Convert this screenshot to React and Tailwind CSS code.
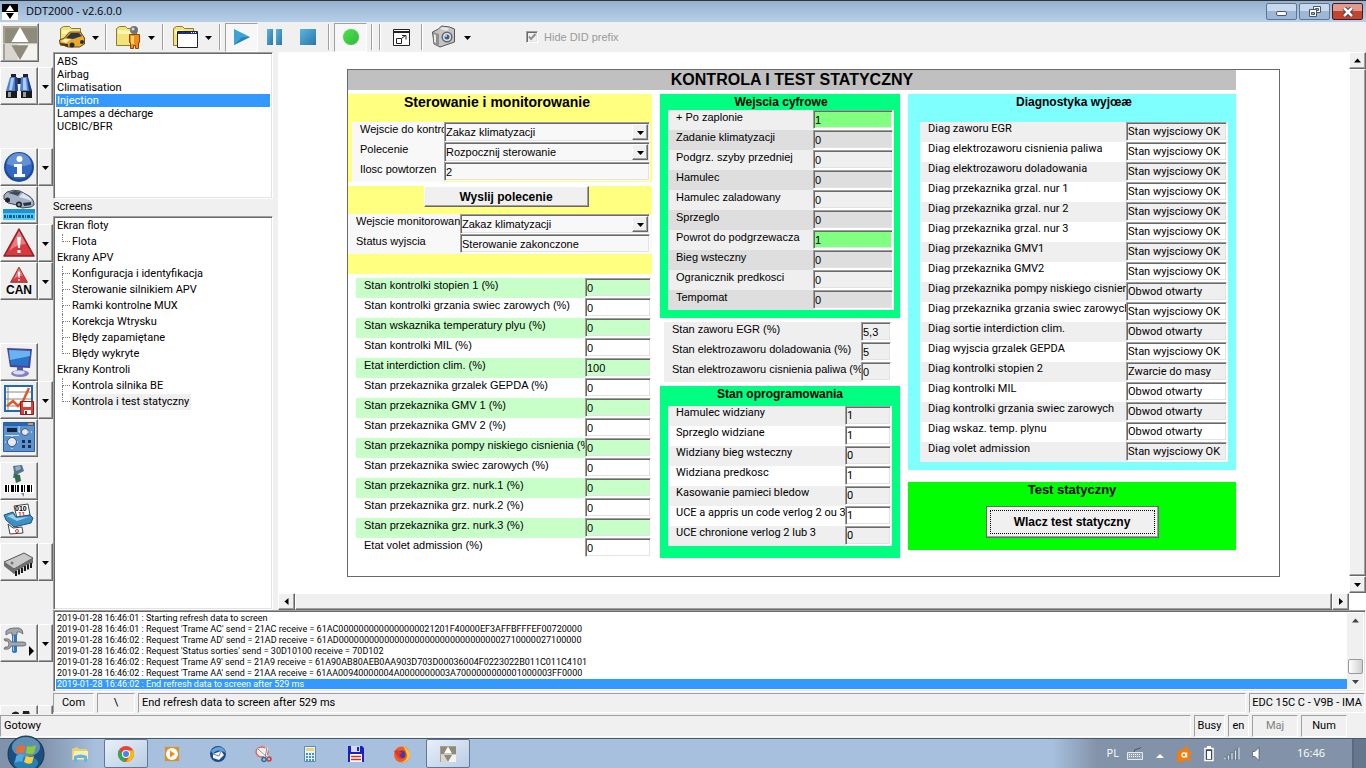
import { useId } from 'react';

const SUNKEN =
  'border border-[#a0a0a0] border-r-white border-b-white shadow-[inset_1px_1px_0_#696969,inset_-1px_-1px_0_#e3e3e3]';
const RAISED =
  'border border-white border-r-[#696969] border-b-[#696969] bg-[#f0f0f0] shadow-[inset_-1px_-1px_0_#a0a0a0]';

const ECUS = ['ABS', 'Airbag', 'Climatisation', 'Injection', 'Lampes a décharge', 'UCBIC/BFR'];

const SCREENS = [
  { name: 'Ekran floty', items: ['Flota'] },
  {
    name: 'Ekrany APV',
    items: [
      'Konfiguracja i identyfikacja',
      'Sterowanie silnikiem APV',
      'Ramki kontrolne MUX',
      'Korekcja Wtrysku',
      'Błędy zapamiętane',
      'Błędy wykryte',
    ],
  },
  { name: 'Ekrany Kontroli', items: ['Kontrola silnika BE', 'Kontrola i test statyczny'] },
];

const STATES = [
  ['Stan kontrolki stopien 1 (%)', '0'],
  ['Stan kontrolki grzania swiec zarowych (%)', '0'],
  ['Stan wskaznika temperatury plyu (%)', '0'],
  ['Stan kontrolki MIL (%)', '0'],
  ['Etat interdiction clim. (%)', '100'],
  ['Stan przekaznika grzalek GEPDA (%)', '0'],
  ['Stan przekaznika GMV 1 (%)', '0'],
  ['Stan przekaznika GMV 2 (%)', '0'],
  ['Stan przekaznika pompy niskiego cisnienia (%)', '0'],
  ['Stan przekaznika swiec zarowych (%)', '0'],
  ['Stan przekaznika grz. nurk.1 (%)', '0'],
  ['Stan przekaznika grz. nurk.2 (%)', '0'],
  ['Stan przekaznika grz. nurk.3 (%)', '0'],
  ['Etat volet admission (%)', '0'],
];

const INPUTS = [
  ['+ Po zaplonie', '1'],
  ['Zadanie klimatyzacji', '0'],
  ['Podgrz. szyby przedniej', '0'],
  ['Hamulec', '0'],
  ['Hamulec zaladowany', '0'],
  ['Sprzeglo', '0'],
  ['Powrot do podgrzewacza', '1'],
  ['Bieg wsteczny', '0'],
  ['Ogranicznik predkosci', '0'],
  ['Tempomat', '0'],
];

const VALVES = [
  ['Stan zaworu EGR (%)', '5,3'],
  ['Stan elektrozaworu doladowania (%)', '5'],
  ['Stan elektrozaworu cisnienia paliwa (%)', '0'],
];

const SOFTWARE = [
  ['Hamulec widziany', '1'],
  ['Sprzeglo widziane', '1'],
  ['Widziany bieg wsteczny', '0'],
  ['Widziana predkosc', '1'],
  ['Kasowanie pamieci bledow', '0'],
  ['UCE a appris un code verlog 2 ou 3', '1'],
  ['UCE chronione verlog 2 lub 3', '0'],
];

const OK = 'Stan wyjsciowy OK';
const OPEN = 'Obwod otwarty';
const OUTPUTS = [
  ['Diag zaworu EGR', OK],
  ['Diag elektrozaworu cisnienia paliwa', OK],
  ['Diag elektrozaworu doladowania', OK],
  ['Diag przekaznika grzal. nur 1', OK],
  ['Diag przekaznika grzal. nur 2', OK],
  ['Diag przekaznika grzal. nur 3', OK],
  ['Diag przekaznika GMV1', OK],
  ['Diag przekaznika GMV2', OK],
  ['Diag przekaznika pompy niskiego cisnienia', OPEN],
  ['Diag przekaznika grzania swiec zarowych', OK],
  ['Diag sortie interdiction clim.', OPEN],
  ['Diag wyjscia grzalek GEPDA', OK],
  ['Diag kontrolki stopien 2', 'Zwarcie do masy'],
  ['Diag kontrolki MIL', OPEN],
  ['Diag kontrolki grzania swiec zarowych', OPEN],
  ['Diag wskaz. temp. plynu', OPEN],
  ['Diag volet admission', OK],
];

const LOG = [
  '2019-01-28 16:46:01 : Starting refresh data to screen',
  "2019-01-28 16:46:01 : Request 'Trame AC' send = 21AC receive = 61AC0000000000000000021201F40000EF3AFFBFFFEF00720000",
  "2019-01-28 16:46:02 : Request 'Trame AD' send = 21AD receive = 61AD000000000000000000000000000000002710000027100000",
  "2019-01-28 16:46:02 : Request 'Status sorties' send = 30D10100 receive = 70D102",
  "2019-01-28 16:46:02 : Request 'Trame A9' send = 21A9 receive = 61A90AB80AEB0AA903D703D00036004F0223022B011C011C4101",
  "2019-01-28 16:46:02 : Request 'Trame AA' send = 21AA receive = 61AA00940000004A0000000003A7000000000001000003FF0000",
  '2019-01-28 16:46:02 : End refresh data to screen after 529 ms',
];

/* ---------- small parts ---------- */

function Caret({ dir = 'down', className = '' }) {
  const paths = {
    down: 'M0 2h7L3.5 6z',
    up: 'M0 5.500h7L3.5 1.500z',
    left: 'M5.500 0v7L1.500 3.500z',
    right: 'M2 0v7L6 3.500z',
  };
  return (
    <svg viewBox="0 0 7 7" className={`h-[7px] w-[7px] shrink-0 ${className}`}>
      <path d={paths[dir]} fill="currentColor" />
    </svg>
  );
}

function Field({ label, value, bg, fieldBg, width }) {
  const id = useId();
  return (
    <div className="flex h-5">
      <label
        htmlFor={id}
        className={`min-w-0 flex-1 overflow-hidden whitespace-nowrap pl-2 leading-[14px] ${bg}`}
      >
        {label}
      </label>
      <input
        id={id}
        readOnly
        defaultValue={value}
        className={`h-[19px] px-px outline-none ${SUNKEN} ${width} ${fieldBg || bg}`}
      />
    </div>
  );
}

function Combo({ label, options, width }) {
  const id = useId();
  return (
    <div className="flex h-5 bg-[#f8f8f8]">
      <label htmlFor={id} className="min-w-0 flex-1 overflow-hidden whitespace-nowrap pl-2 leading-[14px]">
        {label}
      </label>
      <div className={`relative h-5 ${width}`}>
        <select
          id={id}
          className={`h-full w-full appearance-none bg-[#f8f8f8] pr-4 pl-px outline-none ${SUNKEN}`}
        >
          {options.map((o) => (
            <option key={o}>{o}</option>
          ))}
        </select>
        <span
          className={`pointer-events-none absolute top-[2px] right-[2px] bottom-[2px] flex w-4 items-center justify-center ${RAISED}`}
        >
          <Caret />
        </span>
      </div>
    </div>
  );
}

function Heading({ className = 'text-xs', children }) {
  return <h2 className={`text-center font-bold leading-4 ${className}`}>{children}</h2>;
}

function ScrollButton({ dir, label }) {
  return (
    <button aria-label={label} className={`flex h-[17px] w-[17px] shrink-0 items-center justify-center ${RAISED}`}>
      <Caret dir={dir} />
    </button>
  );
}

/* ---------- icons ---------- */

function LogoMark({ className }) {
  return (
    <svg viewBox="0 0 32 32" className={className}>
      <path fill="#a5a191" d="M0 0h32v32H0z" />
      <path fill="#8f8b7a" d="M2 2h30v14H2z" />
      <path fill="#f4f3f0" d="M2 17h30v15H2z" />
      <path fill="#d8d6cf" d="M2 17h12v15H2z" />
      <path fill="#fff" d="M16 1l8 14H8z" />
      <path fill="#8f8b7a" d="M16 32l8-14H8z" />
      <path fill="#c9c7bd" d="M0 16h32v1H0z" />
    </svg>
  );
}

function Binoculars() {
  return (
    <svg viewBox="0 0 32 32" className="h-8 w-8">
      <path fill="#222" d="M8 4h5v4H8zM20 4h5v4h-5zM13 8h6v6h-6z" />
      <path fill="#4f7fd0" d="M7 7h7l1 14H3zM18 7h7l4 14H17z" />
      <path fill="#a9cdf8" d="M8 8h3L9 20H6zM20 8h3l1 12h-4z" />
      <path fill="#1f3f86" d="M12 7h2l1 14h-3zM24 7h1l4 14h-3z" />
      <path fill="#1a1a1a" d="M3 21h11v7H3zM18 21h11v7H18z" />
      <path fill="#999" d="M5 22h3v5H5zM20 22h3v5h-3z" />
    </svg>
  );
}

function Info() {
  return (
    <svg viewBox="0 0 32 32" className="h-8 w-8">
      <circle cx="16" cy="16" r="15" fill="#1d4c9e" />
      <circle cx="16" cy="15" r="13" fill="#3268c0" />
      <path fill="#86abe2" opacity=".6" d="M4 13a12 11 0 0124 0q-12 5-24 0z" />
      <circle cx="16.500" cy="8" r="3" fill="#fff" />
      <path fill="#fff" d="M11 13h8v10h3v3H11v-3h3v-7h-3z" />
    </svg>
  );
}

function Car() {
  return (
    <svg viewBox="0 0 32 32" className="h-8 w-8">
      <path fill="#a4b2c6" stroke="#3f4854" d="M1 6l3-3q7-3 13-1l9 5q5 3 5 9l-3 2-9 1-5-3-9-2-4-4z" />
      <path fill="#3f4c5a" d="M5 4l6-2q4 0 7 1l-3 4q-5-2-10-3z" />
      <path fill="#dbe5f1" d="M16 8l4-4 6 4 3 4-6-2z" />
      <path fill="#2b333d" d="M20 14l8-1v3l-7 1z" />
      <circle cx="4.500" cy="11" r="2.500" fill="#222" />
      <circle cx="16" cy="15.500" r="3" fill="#222" />
      <circle cx="16" cy="15.500" r="1.500" fill="#999" />
      <path fill="#1f93cf" d="M0 20h32v4H0z" />
      <path fill="#53c8f2" d="M0 24h32v7H0z" />
      <path
        stroke="#0c5f93"
        strokeWidth="3"
        strokeDasharray="2 1 1 1 3 1"
        d="M1 27.500h30"
      />
    </svg>
  );
}

function Warning({ className }) {
  return (
    <svg viewBox="0 0 32 32" className={className}>
      <path fill="#d93a3f" stroke="#8c2226" strokeWidth="1.500" strokeLinejoin="round" d="M16 2l15 27H1z" />
      <path fill="#f39a9b" opacity=".7" d="M16 4l7 13Q14 17 6 24z" />
      <path fill="#fff" d="M14 10h4l-1 11h-2zM14.500 23h3v3h-3z" />
    </svg>
  );
}

function CanWarning() {
  return (
    <span className="flex flex-col items-center">
      <Warning className="h-[18px] w-5" />
      <span className="text-xs font-bold leading-3">CAN</span>
    </span>
  );
}

function Monitor() {
  return (
    <svg viewBox="0 0 32 32" className="h-8 w-8">
      <path fill="#45479a" d="M4 2l25 1-2 19-20-1z" />
      <path fill="#2b73c8" d="M6 4l21 1-2 15-17-1z" />
      <path fill="#69b4ee" d="M6 4l21 1v5L7 14z" />
      <path fill="#55579f" d="M14 21h6v5h-6z" />
      <ellipse cx="17" cy="27.500" rx="9" ry="3.500" fill="#7f81c2" />
      <ellipse cx="16" cy="26.500" rx="6" ry="2" fill="#dcdcf2" />
    </svg>
  );
}

function GraphSave() {
  return (
    <svg viewBox="0 0 32 32" className="h-8 w-8">
      <path fill="#fff" stroke="#2268b8" strokeWidth="2" d="M2 2h27v25H2z" />
      <path stroke="#888" d="M5 3v23M3 8h25M3 15h25M3 22h25" />
      <path fill="none" stroke="#e0592b" strokeWidth="2.500" d="M4 22l6-5 5 5 5-5 6-13" />
      <path fill="#d8403a" stroke="#8d1c18" d="M17.500 17.500h13v13h-13z" />
      <path fill="#fff" d="M20 18h8v5h-8zM21 26h7v4h-7z" />
      <path fill="#8d1c18" d="M22 27h2v3h-2z" />
    </svg>
  );
}

function Scope() {
  return (
    <svg viewBox="0 0 32 32" className="h-8 w-8">
      <path fill="#5c92cf" stroke="#2c5d9c" d="M.5.5h31v29H.5z" />
      <path fill="#2368b8" d="M1 1h30v3H1z" />
      <path fill="#f28b31" d="M25 1h5v2h-5z" />
      <path fill="#14263f" d="M4 6h10v4H4z" />
      <path stroke="#d4e4f5" d="M2 13.500h14M16 4v6" />
      <g fill="#e3e8ee" stroke="#3c5475">
        <circle cx="22" cy="10" r="3.500" />
        <circle cx="9" cy="20" r="4.500" />
      </g>
      <path stroke="#fff" strokeDasharray="1 2" d="M16 10h13M2 20h14M9 14v13" />
      <path fill="#1b2e4b" d="M19 18h3v3h-3zM25 18h3v3h-3zM19 23h3v3h-3zM25 23h3v3h-3z" />
    </svg>
  );
}

function BarcodeReader() {
  return (
    <svg viewBox="0 0 32 32" className="h-8 w-8">
      <path fill="#55738c" d="M10 1l9-1 2 6-6 3-1 4h-4l1-6z" />
      <path fill="#2f6b4c" d="M11 9l6 1 1 6-5 2z" />
      <path fill="#8fb0c4" d="M12 2l5-1 1 3-5 2z" />
      <path fill="#fff" d="M1 19h30v9H1z" />
      <path
        stroke="#000"
        strokeWidth="7"
        strokeDasharray="2 1 1 2 3 1 1 1 2 2"
        d="M2 23.500h28"
      />
      <path fill="#6d8fa6" d="M18 28h3v4z" />
    </svg>
  );
}

function Shredder() {
  return (
    <svg viewBox="0 0 32 32" className="h-8 w-8">
      <path fill="#fff" stroke="#444" d="M11 3l14-2 2 11-13 3z" />
      <text x="12" y="8" fontSize="7" fontWeight="bold" fontFamily="Liberation Sans, sans-serif">010</text>
      <text x="15" y="14" fontSize="7" fontWeight="bold" fill="#d33" fontFamily="Liberation Sans, sans-serif">11</text>
      <path fill="#3d8fc4" stroke="#1b587f" d="M1 12l9-3 3 5 14-2 3 3-2 5-17 4L3 17z" />
      <path fill="#9bd0ee" d="M4 13l6-2 3 4 13-1-12 4z" />
      <path fill="#fff" stroke="#444" d="M5 21l5 4 9-1 1 6-13 1z" />
      <circle cx="14" cy="28" r="1.500" fill="none" stroke="#d33" />
    </svg>
  );
}

function Chip() {
  return (
    <svg viewBox="0 0 32 32" className="h-8 w-8">
      <path fill="#c9c9c9" stroke="#555" d="M1 16l20-9 9 5-19 11z" />
      <path fill="#6f6f6f" d="M1 16l10 7v5L1 20zM11 23l19-11v5L11 28z" />
      <path
        stroke="#1a1a1a"
        strokeWidth="2"
        d="M13 25v5M16 23.500v5M19 22v5M22 20v5M25 18.500v5M28 17v5"
      />
      <path stroke="#ddd" d="M14.500 24v4M17.500 22.500v4M20.500 21v4M23.500 19v4M26.500 17.500v4" />
      <circle cx="9" cy="17" r="1.500" fill="#777" />
    </svg>
  );
}

function Tools() {
  return (
    <svg viewBox="0 0 32 32" className="h-8 w-8">
      <path fill="#2e78c4" d="M9 7h5v18q-2.500 2-5 0z" />
      <path fill="#9cc8f2" d="M10 8h1v16h-1z" />
      <path fill="#a3a8ac" stroke="#5b6064" strokeWidth=".8" d="M3 4q3-3 8-3h5q4 1 4 6-3-3-6-2v3H9V6Q6 5 3 8z" />
      <path
        fill="#a3a8ac"
        stroke="#5b6064"
        strokeWidth=".8"
        d="M1 12q6-1 7 3h12q3 0 3 2t-3 2H8q-1 4-7 3l1-2h3q2-3 0-6H2z"
      />
      <path fill="#000" d="M26 19v10l5-5z" />
    </svg>
  );
}

function People() {
  return (
    <svg viewBox="0 0 32 32" className="h-8 w-8">
      <path fill="#222" d="M9 5q4-3 7 0v6H8zM20 3h6l2 8h-9z" />
      <path fill="#888" d="M16 6h3v5h-3z" />
    </svg>
  );
}

const folder = (
  <>
    <path fill="#f1e37a" stroke="#8b7f2b" d="M1.500 3.500l3-2h6l2 2h9v17h-20z" />
    <path fill="#fbf5b5" d="M3 5h8l2 1h7v3H3z" />
  </>
);

function FolderCar() {
  return (
    <svg viewBox="0 0 26 24" className="h-6 w-[26px]">
      {folder}
      <path fill="#e9a92c" stroke="#6b4a12" d="M.5 15l5-2 5-6h11l4 6v6l-5 3H9l-8-3z" />
      <path fill="#2c3742" d="M7 13l5-5h8l3 3-9 3z" />
      <path fill="#fff3c4" d="M2 16l4-2h6l-5 4z" />
      <path fill="#4a3510" d="M1 18l8 1v3l-8-3z" />
      <circle cx="13" cy="20" r="2.500" fill="#2b2b2b" />
      <circle cx="23" cy="17" r="2" fill="#2b2b2b" />
    </svg>
  );
}

function FolderPerson() {
  return (
    <svg viewBox="0 0 26 24" className="h-6 w-[26px]">
      {folder}
      <path fill="#f08c1c" stroke="#8a4a06" d="M14.500 9.500h10v8h-1v6h-3v-3h-2v3h-3v-6h-1z" />
      <path fill="#ffcf62" d="M16 11h3v8h-3z" />
      <circle cx="19" cy="5" r="4" fill="#6f7378" />
      <circle cx="18" cy="4" r="1.500" fill="#d4d7da" />
    </svg>
  );
}

function FolderWindow() {
  return (
    <svg viewBox="0 0 26 24" className="h-6 w-[26px]">
      {folder}
      <path fill="#fff" stroke="#222" d="M5.500 6.500h20v16h-20z" />
      <path fill="#1d2e83" d="M6 7h19v2H6z" />
      <path fill="#fff" d="M19 7h1v1h-1zM21 7h1v1h-1zM23 7h1v1h-1z" />
    </svg>
  );
}

function Camera() {
  return (
    <svg viewBox="0 0 26 24" className="h-6 w-[26px]">
      <path fill="#c4c4c4" stroke="#555" d="M1.500 7l6-3 3-3 8 1 5 2v13L9 22l-6-3z" />
      <path fill="#909090" d="M2 7l6 2v13l-5-3z" />
      <path fill="#e8e8e8" d="M9 4l3-2 6 1-2 3zM3 9l2 1v8l-2-1z" />
      <circle cx="16" cy="12" r="5.500" fill="#666" />
      <circle cx="16" cy="12" r="4" fill="#e4e4e4" />
      <circle cx="16" cy="12" r="2.500" fill="#33618f" />
      <circle cx="15" cy="11" r="1" fill="#bfe0ff" />
    </svg>
  );
}

/* ---------- side bar ---------- */

function SideButton({ label, menu, children }) {
  return (
    <div className="flex h-[38px] shrink-0">
      <button
        aria-label={label}
        className={`flex w-[38px] items-center justify-center overflow-hidden ${RAISED}`}
      >
        {children}
      </button>
      {menu && (
        <button aria-label={`${label} menu`} className={`flex w-[15px] items-center justify-center ${RAISED}`}>
          <Caret />
        </button>
      )}
    </div>
  );
}

function SideBar() {
  return (
    <nav className="flex w-[53px] shrink-0 flex-col gap-[5px] overflow-hidden">
      <button aria-label="Home" className={`mt-px flex h-[39px] w-[39px] shrink-0 items-center justify-center ${RAISED}`}>
        <LogoMark className="h-[34px] w-[34px]" />
      </button>
      <SideButton label="Search" menu>
        <Binoculars />
      </SideButton>
      <div className="h-[33px] shrink-0" />
      <div className="flex shrink-0 flex-col">
        <SideButton label="Information" menu>
          <Info />
        </SideButton>
        <SideButton label="Vehicle">
          <Car />
        </SideButton>
        <SideButton label="Faults" menu>
          <Warning className="h-8 w-8" />
        </SideButton>
        <SideButton label="CAN faults" menu>
          <CanWarning />
        </SideButton>
      </div>
      <div className="h-[33px] shrink-0" />
      <div className="flex shrink-0 flex-col">
        <SideButton label="Monitor">
          <Monitor />
        </SideButton>
        <SideButton label="Graph" menu>
          <GraphSave />
        </SideButton>
        <SideButton label="Oscilloscope">
          <Scope />
        </SideButton>
      </div>
      <div className="flex shrink-0 flex-col">
        <SideButton label="Barcode">
          <BarcodeReader />
        </SideButton>
        <SideButton label="Data">
          <Shredder />
        </SideButton>
      </div>
      <SideButton label="Memory" menu>
        <Chip />
      </SideButton>
      <div className="h-[33px] shrink-0" />
      <SideButton label="Tools" menu>
        <Tools />
      </SideButton>
      <div className="h-[33px] shrink-0" />
      <SideButton label="Users" menu>
        <People />
      </SideButton>
    </nav>
  );
}

/* ---------- tool bar ---------- */

function Separator() {
  return <span className="h-[26px] w-[2px] shrink-0 border-r border-l border-[#a0a0a0] border-r-white" />;
}

function MenuTool({ label, width = 'w-[55px]', children }) {
  return (
    <button aria-label={label} className={`flex h-full items-center justify-center gap-[7px] ${width}`}>
      {children}
      <Caret className="h-2 w-2" />
    </button>
  );
}

function Tool({ label, pressed, children }) {
  return (
    <button
      aria-label={label}
      className={`flex h-[29px] w-[33px] items-center justify-center ${
        pressed ? 'border border-[#a0a0a0] border-r-white border-b-white bg-[#f7f7f7]' : ''
      }`}
    >
      {children}
    </button>
  );
}

function ToolBar() {
  return (
    <div className="flex h-[30px] shrink-0 items-center overflow-hidden">
      <MenuTool label="Open vehicle" width="w-[52px]">
        <FolderCar />
      </MenuTool>
      <Separator />
      <MenuTool label="Open user">
        <FolderPerson />
      </MenuTool>
      <Separator />
      <MenuTool label="Open screen">
        <FolderWindow />
      </MenuTool>
      <Separator />
      <div className="flex px-1">
        <Tool label="Play" pressed>
          <svg viewBox="0 0 16 16" className="h-4 w-4">
            <path fill="#3ba3d6" d="M0 0l16 8-16 8z" />
            <path fill="#2b84b8" d="M0 16l16-8H8z" />
          </svg>
        </Tool>
        <Tool label="Pause">
          <span className="flex gap-[3px]">
            <span className="h-4 w-[6px] bg-gradient-to-br from-[#5bb5e0] to-[#2a77a8]" />
            <span className="h-4 w-[6px] bg-gradient-to-br from-[#5bb5e0] to-[#2a77a8]" />
          </span>
        </Tool>
        <Tool label="Stop">
          <span className="h-4 w-4 bg-gradient-to-br from-[#5bb5e0] to-[#2a77a8]" />
        </Tool>
      </div>
      <Separator />
      <div className="flex px-1">
        <Tool label="Record" pressed>
          <span className="h-4 w-4 rounded-full bg-gradient-to-br from-[#4fe24f] to-[#2fb83a]" />
        </Tool>
      </div>
      <Separator />
      <span className="w-[6px]" />
      <Separator />
      <span className="flex w-10 justify-center">
        <Tool label="Fit to screen">
          <svg viewBox="0 0 17 17" className="h-[17px] w-[17px]">
            <path fill="#fff" stroke="#222" d="M.5.5h16v16H.5z" />
            <path fill="#222" d="M1 2h15v2H1z" />
            <path fill="none" stroke="#222" d="M3.500 9.500h5v5h-5zM8.500 9.500l4-3M9 6.500h4v4" />
          </svg>
        </Tool>
      </span>
      <Separator />
      <MenuTool label="Screenshot">
        <Camera />
      </MenuTool>
      <label className="ml-12 flex items-center gap-[6px] text-[11px] text-[#9a9a9a]">
        <span className="relative flex">
          <input type="checkbox" defaultChecked disabled className={`h-3 w-3 appearance-none bg-[#f0f0f0] ${SUNKEN}`} />
          <svg viewBox="0 0 12 12" className="pointer-events-none absolute inset-0 h-3 w-3">
            <path fill="none" stroke="#8f8f8f" strokeWidth="2" d="M3 5.500l2 2.500 4.500-5" />
          </svg>
        </span>
        Hide DID prefix
      </label>
    </div>
  );
}

/* ---------- lists on the left ---------- */

function Explorer() {
  return (
    <aside className="flex w-[220px] shrink-0 flex-col font-['Roboto',sans-serif] text-[11px]">
      <ul className={`h-[147px] shrink-0 bg-white p-[2px] ${SUNKEN}`}>
        {ECUS.map((name) => (
          <li
            key={name}
            className={`h-[13px] pl-px leading-[13px] ${name === 'Injection' ? 'bg-[#3399ff] text-white' : ''}`}
          >
            {name}
          </li>
        ))}
      </ul>
      <h3 className="h-[17px] shrink-0 leading-[15px]">Screens</h3>
      <ul className={`min-h-0 flex-1 overflow-hidden bg-white px-[2px] pt-px ${SUNKEN}`}>
        {SCREENS.map((group) => (
          <li key={group.name}>
            <div className="h-4 pl-px leading-4">{group.name}</div>
            <ul className="pl-[6px]">
              {group.items.map((item, i) => (
                <li key={item} className="flex h-4">
                  <span className="w-2">
                    <span className="block h-2 border-b border-l border-dotted border-[#808080]" />
                    {i < group.items.length - 1 && (
                      <span className="block h-2 border-l border-dotted border-[#808080]" />
                    )}
                  </span>
                  <span
                    className={`px-[2px] leading-4 ${item === 'Kontrola i test statyczny' ? 'bg-[#f0f0f0]' : ''}`}
                  >
                    {item}
                  </span>
                </li>
              ))}
            </ul>
          </li>
        ))}
      </ul>
    </aside>
  );
}

/* ---------- main screen ---------- */

function ControlColumn() {
  return (
    <section className="w-[304px] shrink-0">
      <div className="bg-[#ffff80] pr-[2px] pl-1">
        <Heading className="h-7 pr-2 text-sm">Sterowanie i monitorowanie</Heading>
        <Combo label="Wejscie do kontroli" options={['Zakaz klimatyzacji']} width="w-[206px]" />
        <Combo label="Polecenie" options={['Rozpocznij sterowanie']} width="w-[206px]" />
        <Field label="Ilosc powtorzen" value="2" bg="bg-[#f8f8f8]" width="w-[206px]" />
      </div>
      <div className="mt-1 flex h-7 justify-center bg-[#ffff80] pl-3">
        <button className={`h-[21px] w-[165px] text-xs font-bold ${RAISED}`}>Wyslij polecenie</button>
      </div>
      <div className="bg-[#f8f8f8] pr-[2px]">
        <Combo label="Wejscie monitorowania" options={['Zakaz klimatyzacji']} width="w-[190px]" />
        <Field label="Status wyjscia" value="Sterowanie zakonczone" bg="bg-[#f8f8f8]" width="w-[190px]" />
      </div>
      <div className="mb-1 h-5 bg-[#ffff80]" />
      <div className="pr-px pl-2">
        {STATES.map(([label, value], i) => (
          <Field key={label} label={label} value={value} bg={i % 2 ? 'bg-white' : 'bg-[#c8ffc8]'} width="w-[66px]" />
        ))}
      </div>
    </section>
  );
}

function InputColumn() {
  return (
    <section className="w-[240px] shrink-0">
      <div className="bg-[#00ff80] pr-[6px] pb-2 pl-2">
        <Heading>Wejscia cyfrowe</Heading>
        <div className="bg-white pr-px">
          {INPUTS.map(([label, value], i) => (
            <Field
              key={label}
              label={label}
              value={value}
              bg={i % 2 ? 'bg-[#dedede]' : 'bg-[#efefef]'}
              fieldBg={value === '1' ? 'bg-[#80ff80]' : ''}
              width="w-20"
            />
          ))}
        </div>
      </div>
      <div className="my-1 mr-[9px] ml-1">
        {VALVES.map(([label, value]) => (
          <Field key={label} label={label} value={value} bg="bg-[#efefef]" width="w-[30px]" />
        ))}
      </div>
      <div className="bg-[#00ff80] pr-2 pb-3 pl-2">
        <Heading className="h-5 text-xs">Stan oprogramowania</Heading>
        <div className="bg-white pr-px font-['Roboto',sans-serif]">
          {SOFTWARE.map(([label, value], i) => (
            <Field key={label} label={label} value={value} bg={i % 2 ? 'bg-white' : 'bg-[#efefef]'} width="w-[46px]" />
          ))}
        </div>
      </div>
    </section>
  );
}

function OutputColumn() {
  return (
    <section className="min-w-0 flex-1">
      <div className="bg-[#80ffff] pr-2 pb-2 pl-3">
        <Heading className="h-7 text-xs">Diagnostyka wyjœæ</Heading>
        <div className="bg-white pr-px font-['Roboto',sans-serif]">
          {OUTPUTS.map(([label, value], i) => (
            <Field key={label} label={label} value={value} bg={i % 2 ? 'bg-white' : 'bg-[#efefef]'} width="w-[101px]" />
          ))}
        </div>
      </div>
      <div className="mt-3 flex h-[68px] flex-col items-center bg-[#00ff00]">
        <Heading className="h-6 text-[13px]">Test statyczny</Heading>
        <button className={`h-8 w-[173px] p-[3px] text-xs font-bold outline-1 -outline-offset-1 outline-[#696969] ${RAISED}`}>
          <span className="flex h-full items-center justify-center border border-dotted border-black">
            Wlacz test statyczny
          </span>
        </button>
      </div>
    </section>
  );
}

function Workspace() {
  return (
    <main className="ml-[5px] flex min-w-0 flex-1 flex-col bg-white">
      <div className="flex min-h-0 flex-1">
        <div className="min-w-0 flex-1 overflow-hidden pt-[17px]">
          <div className="mx-auto max-w-[933px] border border-[#696969] pr-[43px] pb-[18px] text-[11px]">
            <h1 className="mb-1 h-5 bg-[#c0c0c0] text-center text-base font-bold leading-5">
              KONTROLA I TEST STATYCZNY
            </h1>
            <div className="flex gap-2">
              <ControlColumn />
              <InputColumn />
              <OutputColumn />
            </div>
          </div>
        </div>
        <div className="flex w-[17px] shrink-0 flex-col">
          <ScrollButton dir="up" label="Scroll up" />
          <div className={`flex-1 ${RAISED}`} />
          <ScrollButton dir="down" label="Scroll down" />
        </div>
      </div>
      <div className="mr-[17px] flex h-[17px] shrink-0">
        <ScrollButton dir="left" label="Scroll left" />
        <div className={`flex-1 ${RAISED}`} />
        <ScrollButton dir="right" label="Scroll right" />
      </div>
    </main>
  );
}

function LogPanel() {
  return (
    <div className={`flex h-[82px] shrink-0 bg-white p-[2px] ${SUNKEN}`}>
      <ul className="min-w-0 flex-1 overflow-hidden whitespace-nowrap font-['Roboto',sans-serif] text-[9px]">
        {LOG.map((line, i) => (
          <li
            key={line}
            className={`h-[11px] pl-px leading-[11px] ${i === LOG.length - 1 ? 'bg-[#3399ff] text-white' : ''}`}
          >
            {line}
          </li>
        ))}
      </ul>
      <div className="flex w-4 flex-col items-center bg-[#f0f0f0] py-1 text-[#444]">
        <Caret dir="up" />
        <span className="flex-1" />
        <span className="mb-1 h-[15px] w-[15px] rounded-xs border border-[#999] bg-gradient-to-r from-white to-[#d0d0d0]" />
        <Caret />
      </div>
    </div>
  );
}

function StatusCell({ className = '', children }) {
  return (
    <span
      className={`flex items-center overflow-hidden whitespace-nowrap border border-[#a0a0a0] border-r-white border-b-white ${className}`}
    >
      {children}
    </span>
  );
}

/* ---------- window chrome ---------- */

function TitleBar() {
  return (
    <header className="flex h-[22px] shrink-0 items-center border-t border-[#333] bg-gradient-to-b from-[#96b2d1] to-[#b7cfe8] pr-[3px] pl-[2px]">
      <svg viewBox="0 0 16 16" className="h-4 w-4">
        <path fill="#000" d="M0 0h16v8H0z" />
        <path fill="#fff" d="M0 8h16v8H0zM8 1l4 6H4z" />
        <path fill="#000" d="M8 15l4-6H4z" />
      </svg>
      <span className="ml-2 flex-1 font-['Open_Sans',sans-serif] text-[11px]">DDT2000 - v2.6.0.0</span>
      <div className="flex gap-[2px]">
        {['Minimize', 'Restore'].map((name) => (
          <button
            key={name}
            aria-label={name}
            className="flex h-[17px] w-[31px] items-center justify-center rounded-xs border border-[#5f7593] bg-gradient-to-b from-[#c6d9ed] from-50% to-[#9db7d4] to-50%"
          >
            {name === 'Minimize' ? (
              <span className="mt-1 h-[5px] w-[11px] rounded-xs border border-[#4b5669] bg-white" />
            ) : (
              <svg viewBox="0 0 12 11" className="h-[11px] w-3">
                <path fill="#fff" stroke="#4b5669" d="M4.500.5h7v6h-7z" />
                <path fill="#9db7d4" stroke="#4b5669" d="M6.500 2.500h3v2h-3z" />
                <path fill="#fff" stroke="#4b5669" d="M.5 3.500h7v7h-7z" />
                <path fill="#9db7d4" stroke="#4b5669" d="M2.500 6.500h3v2h-3z" />
              </svg>
            )}
          </button>
        ))}
        <button
          aria-label="Close"
          className="flex h-[17px] w-[31px] items-center justify-center rounded-xs border border-[#4b1620] bg-gradient-to-b from-[#e09a8c] from-50% to-[#c2452f] to-50%"
        >
          <svg viewBox="0 0 12 10" className="h-[10px] w-3">
            <path stroke="#4b3540" strokeWidth="4.500" d="M2 1l8 8M10 1L2 9" />
            <path stroke="#fff" strokeWidth="2.500" d="M2 1l8 8M10 1L2 9" />
          </svg>
        </button>
      </div>
    </header>
  );
}

const TASKS = [
  {
    name: 'Explorer',
    icon: (
      <>
        <path fill="#e9cf74" d="M1 4l5-2 2 2h8v11H1z" />
        <path fill="#fbf0b4" d="M3 6h14v8H2z" />
        <path fill="#62b5e5" d="M3 11q7-3 13 0v6h-3v-4H6v4H3z" />
      </>
    ),
  },
  {
    name: 'Chrome',
    active: true,
    icon: (
      <>
        <circle cx="9" cy="9" r="8" fill="#ea4335" />
        <path fill="#34a853" d="M2 5l5 6 2 6A8 8 0 012 5z" />
        <path fill="#fbbc05" d="M9 5.500h7.200A8 8 0 019 17l3.500-6z" />
        <circle cx="9" cy="9" r="4" fill="#fff" />
        <circle cx="9" cy="9" r="3" fill="#4285f4" />
      </>
    ),
  },
  {
    name: 'Media player',
    icon: (
      <>
        <path fill="#8ec3ea" d="M1 1h16v16H1z" />
        <path fill="#f28a12" d="M2 2h14v14H2z" />
        <circle cx="9" cy="9" r="6" fill="#fff" />
        <path fill="#f28a12" d="M7 5.500l5 3.500-5 3.500z" />
      </>
    ),
  },
  {
    name: 'Thunderbird',
    icon: (
      <>
        <circle cx="9" cy="9" r="8" fill="#1c4c86" />
        <path fill="#5fa4dc" d="M2 6q5-6 12-3l3 5-4-2q-6-2-9 3z" />
        <path fill="#f3f3f0" d="M4 9l8-3 3 4-5 5-6-2z" />
        <path fill="none" stroke="#7f8a96" d="M4 9l6 2 2-5" />
      </>
    ),
  },
  {
    name: 'Snipping tool',
    icon: (
      <>
        <ellipse cx="7" cy="7" rx="6" ry="5" fill="#f6e8e6" stroke="#d86a5c" strokeWidth="1.500" />
        <path stroke="#fff" strokeWidth="2.500" d="M3 4l10 9M12 2l-2 11" />
        <path stroke="#7b8793" d="M3 4l10 9M12 2l-2 11" />
        <circle cx="14" cy="14" r="2" fill="none" stroke="#c8402f" strokeWidth="1.500" />
        <circle cx="9" cy="14.500" r="2" fill="none" stroke="#2d6da8" strokeWidth="1.500" />
      </>
    ),
  },
  {
    name: 'Calculator',
    icon: (
      <>
        <path fill="#e8f2fb" stroke="#5a8db8" d="M3.500 1.500h11v15h-11z" />
        <path fill="#f5d36a" d="M5 3h8v3H5z" />
        <path stroke="#4b92cc" strokeWidth="2" strokeDasharray="2 1" d="M5 9h8M5 12h8M5 15h8" />
      </>
    ),
  },
  {
    name: 'Commander',
    icon: (
      <>
        <path fill="#1721c4" d="M1 1h14l2 2v14H1z" />
        <path fill="#d7dbf5" d="M4 1h9v6H4z" />
        <path fill="#1721c4" d="M10 2h2v4h-2z" />
        <path fill="#fff" d="M3 9h12v8H3z" />
        <path stroke="#e02525" strokeWidth="1.500" d="M4 11.500h10M4 14.500h10" />
      </>
    ),
  },
  {
    name: 'Firefox',
    icon: (
      <>
        <circle cx="9" cy="9.500" r="8" fill="#f25c1e" />
        <path fill="#ffc52e" d="M10 1q8 4 7 10-2 7-9 6 6-1 6-7-1-5-4-9z" />
        <circle cx="8.500" cy="9.500" r="4" fill="#4a3aa8" />
        <path fill="#e8352a" d="M1 6l4-1 4 3-3 2 3 3q-4 1-5-2z" />
      </>
    ),
  },
  { name: 'DDT2000', active: true, icon: null },
];

function TaskBar() {
  return (
    <footer className="flex h-[30px] shrink-0 items-stretch border-t border-[#4a5a6e] bg-gradient-to-r from-[#8093aa] from-3% via-[#a6c0dd] via-7% to-[#a6c0dd] text-[11px]">
      <button aria-label="Start" className="relative w-[57px]">
        <svg viewBox="0 0 38 38" className="absolute -top-1 left-[7px] h-[38px] w-[38px]">
          <circle cx="19" cy="19" r="18" fill="#1c4f7e" stroke="#15324f" />
          <ellipse cx="19" cy="12" rx="14" ry="10" fill="#8fbbd9" opacity=".6" />
          <ellipse cx="19" cy="28" rx="12" ry="7" fill="#2ba3d8" opacity=".6" />
          <path fill="#ef6a2f" d="M10 12q4-3 8-1l-1 7q-4-2-8 1z" />
          <path fill="#8ccb3c" d="M20 11q4 2 9-1l-2 8q-4 2-8 0z" />
          <path fill="#4fa9e8" d="M9 21q4-3 8-1l-2 7q-3-2-7 1z" />
          <path fill="#fccf3a" d="M19 21q4 2 8 0l-2 7q-4 2-8-1z" />
        </svg>
      </button>
      <div className="flex">
        {TASKS.map(({ name, active, icon }) => (
          <button
            key={name}
            aria-label={name}
            className={`mx-px flex w-11 items-center justify-center ${
              active ? 'rounded-xs border border-[#5f7896] bg-gradient-to-br from-[#e8f0f8] to-[#b9cde3]' : ''
            }`}
          >
            {icon ? (
              <svg viewBox="0 0 18 18" className="h-[18px] w-[18px]">
                {icon}
              </svg>
            ) : (
              <LogoMark className="h-4 w-4" />
            )}
          </button>
        ))}
      </div>
      <div className="flex flex-1 items-center justify-end bg-gradient-to-r from-transparent from-65% to-[#8293a9] to-70% font-['Open_Sans',sans-serif] text-white">
        <span>PL</span>
        <svg viewBox="0 0 16 14" className="ml-2 h-[14px] w-4">
          <path fill="#93a2b4" stroke="#e4eaf0" d="M.5 5.500h15v7H.5z" />
          <path stroke="#fff" strokeDasharray="1 1" d="M2 7.500h12M2 9.500h12" />
          <path fill="none" stroke="#47566a" d="M7 5q0-3 3-3t4-2" />
        </svg>
        <svg viewBox="0 0 8 5" className="mt-1 ml-[13px] h-[5px] w-2">
          <path fill="#fff" d="M0 5l4-4 4 4z" />
        </svg>
        <svg viewBox="0 0 16 16" className="ml-3 h-4 w-4">
          <path fill="#ff7a00" d="M1 5l4 0 4-4 3 0 0 4 4 2-3 4 3 4-6-1-5 2-5-1 2-4z" />
          <circle cx="8" cy="9" r="2" fill="none" stroke="#fff" strokeWidth="1.500" />
          <path stroke="#fff" strokeWidth="1.500" d="M10.500 6.500v5" />
        </svg>
        <svg viewBox="0 0 10 16" className="ml-3 h-4 w-[10px]">
          <path fill="#3b4655" stroke="#fff" strokeWidth="1.500" d="M1 2.500h8v12H1z" />
          <path fill="#fff" d="M3 0h4v2H3zM3 5h4v8H3z" />
        </svg>
        <svg viewBox="0 0 16 13" className="ml-[10px] h-[13px] w-4">
          <path
            fill="#dfe6ee"
            stroke="#4b5a6d"
            strokeWidth=".6"
            d="M0 10h2v3H0zM3.500 8h2v5h-2zM7 5.500h2V13H7zM10.500 3h2v10h-2zM14 0h2v13h-2z"
          />
        </svg>
        <svg viewBox="0 0 9 14" className="ml-3 h-[14px] w-[9px]">
          <path fill="#fff" stroke="#45536a" strokeWidth=".7" d="M.5 4.500h2.500L7 .5v13L3 9.500H.5z" />
        </svg>
        <time className="ml-9">16:46</time>
        <button aria-label="Show desktop" className="ml-[27px] h-full w-[14px] border-l-2 border-[#5a6a7e] bg-[#65778d]" />
      </div>
    </footer>
  );
}

export default function App() {
  return (
    <div className="flex h-screen min-h-[768px] flex-col overflow-hidden bg-[#f0f0f0] font-['Liberation_Sans',Arial,sans-serif] text-black">
      <TitleBar />
      <div className="flex min-h-0 flex-1">
        <SideBar />
        <div className="flex min-w-0 flex-1 flex-col">
          <ToolBar />
          <div className="flex min-h-0 flex-1">
            <Explorer />
            <Workspace />
          </div>
          <LogPanel />
          <div className="flex h-[22px] shrink-0 gap-[3px] py-px font-['Roboto',sans-serif] text-[11px]">
            <StatusCell className="w-[41px] justify-center">Com</StatusCell>
            <StatusCell className="w-[38px] justify-center">\</StatusCell>
            <StatusCell className="flex-1 pl-[3px]">End refresh data to screen after 529 ms</StatusCell>
            <StatusCell className="mr-px w-[116px] justify-center">EDC 15C C - V9B - IMA</StatusCell>
          </div>
        </div>
      </div>
      <div className="flex h-6 shrink-0 gap-[3px] py-px pr-[19px] font-['Roboto',sans-serif] text-[11px]">
        <StatusCell className="flex-1 pl-[3px]">Gotowy</StatusCell>
        <StatusCell className="w-[31px] justify-center">Busy</StatusCell>
        <StatusCell className="w-[21px] justify-center">en</StatusCell>
        <StatusCell className="w-[46px] justify-center text-[#808080]">Maj</StatusCell>
        <StatusCell className="w-[46px] justify-center">Num</StatusCell>
      </div>
      <TaskBar />
    </div>
  );
}
